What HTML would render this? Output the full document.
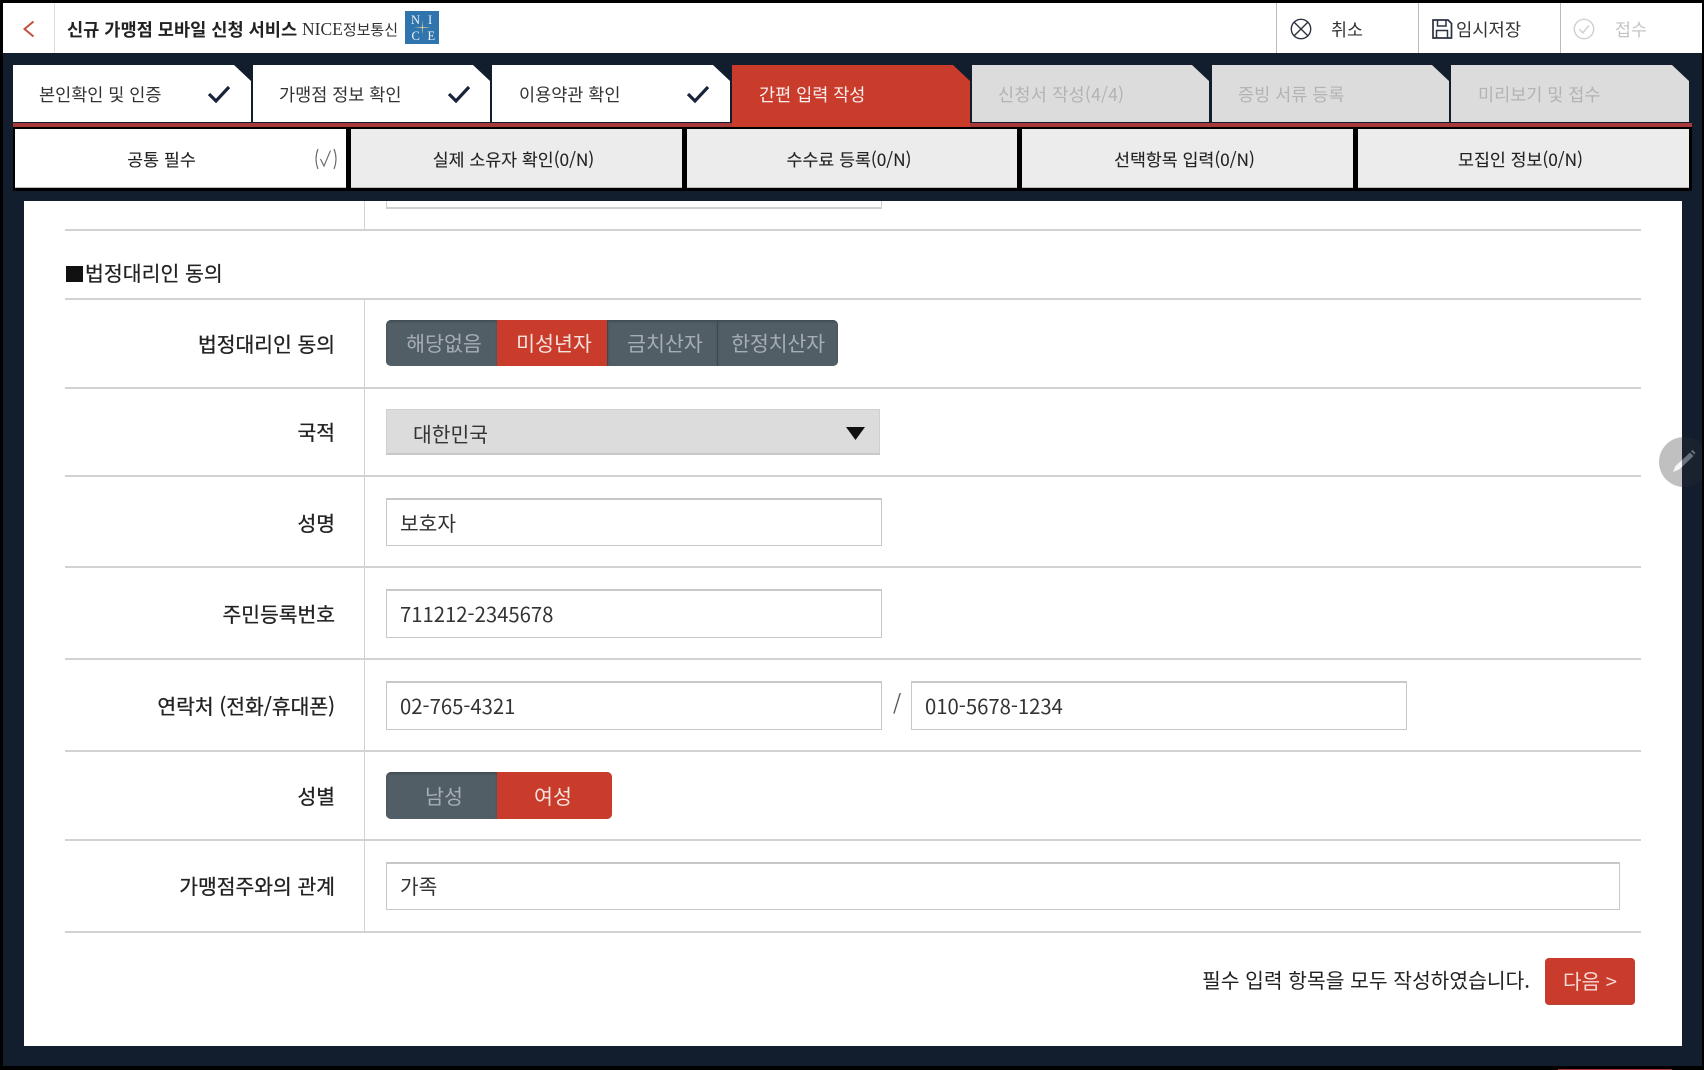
<!DOCTYPE html>
<html lang="ko"><head><meta charset="utf-8"><title>신규 가맹점 모바일 신청 서비스</title>
<style>
*{box-sizing:border-box;margin:0;padding:0}
html,body{width:1704px;height:1070px;overflow:hidden;background:#000}
body{position:relative;font-family:"Liberation Sans","Noto Sans CJK KR",sans-serif;color:#222}
.a{position:absolute}
.t{position:absolute;white-space:nowrap;font-family:"Noto Sans CJK KR","Liberation Sans",sans-serif;line-height:1}
.tab{position:absolute;top:65px;height:57px;clip-path:polygon(0 0,calc(100% - 17px) 0,100% 16px,100% 100%,0 100%);background:#fff}
.tab .t{top:21px;font-size:17.5px;color:#333}
.tab.off{background:#dcdcdc}.tab.off .t{color:#b3b3b3}
.sub{position:absolute;top:129px;height:59px;background:#ececec;border-bottom:1px solid #bbb;text-align:center}
.sub span{display:block;font-family:"Noto Sans CJK KR","Liberation Sans",sans-serif;font-size:17.3px;line-height:59px;color:#222;white-space:nowrap;-webkit-text-stroke:.1px #222}
.h{position:absolute;left:65px;width:1576px;height:2px;background:#d2d2d2}
.lb{position:absolute;right:1369px;font-family:"Noto Sans CJK KR","Liberation Sans",sans-serif;font-size:20.4px;line-height:24px;color:#222;white-space:nowrap;-webkit-text-stroke:.3px #222}
.in{position:absolute;background:#fff;border:1px solid #c8c8c8;border-top-width:2px;font-family:"Noto Sans CJK KR","Liberation Sans",sans-serif;font-size:20.3px;color:#333;padding-left:13px;white-space:nowrap}
.seg{position:absolute;top:0;height:100%;text-align:center;color:#a6adb3;background:#525e66;box-shadow:inset 0 2px 2px rgba(0,0,0,.18);font-family:"Noto Sans CJK KR","Liberation Sans",sans-serif;font-size:20.6px;white-space:nowrap}
.seg.on{background:#c93c2c;color:#f5e3e0;box-shadow:none}
.lg{position:absolute;font:12.5px/13px 'Liberation Serif',serif;color:#f2f6fa}
</style></head><body>
<div class="a" style="left:3px;top:3px;width:1699px;height:1063px;background:#121e2e"></div>

<!-- header -->
<div class="a" style="left:3px;top:3px;width:1699px;height:50px;background:#fff"></div>
<div class="a" style="left:54px;top:3px;width:1px;height:50px;background:#ddd"></div>
<svg class="a" style="left:20px;top:20px" width="18" height="18" viewBox="0 0 18 18"><path d="M13.5 1.5 L4.5 9 L13.5 16.5" fill="none" stroke="#c0503f" stroke-width="2"/></svg>
<div class="t" style="left:67px;top:21px;font-size:17.6px;font-weight:700;color:#222">신규 가맹점 모바일 신청 서비스</div>
<div class="t" style="left:302px;top:21px;font-size:17.5px;font-family:'Liberation Serif','Noto Serif CJK SC',serif;color:#333">NICE<span style="font-size:15px;font-family:'Noto Sans CJK KR',sans-serif">정보통신</span></div>
<div class="a" style="left:405px;top:11px;width:34px;height:33px;background:#2f74ad"></div>
<div class="a" style="left:422px;top:20px;width:1px;height:15px;background:linear-gradient(#2f74ad,#e0cf90,#2f74ad)"></div>
<div class="a" style="left:414px;top:27px;width:17px;height:1px;background:linear-gradient(90deg,#2f74ad,#e0cf90,#2f74ad)"></div>
<div class="lg" style="left:411px;top:14px">N</div>
<div class="lg" style="left:428px;top:14px">I</div>
<div class="lg" style="left:411.5px;top:30px">C</div>
<div class="lg" style="left:427.5px;top:30px">E</div>
<div class="a" style="left:1276px;top:3px;width:1px;height:50px;background:#bbb"></div>
<div class="a" style="left:1418px;top:3px;width:1px;height:50px;background:#bbb"></div>
<div class="a" style="left:1560px;top:3px;width:1px;height:50px;background:#bbb"></div>
<svg class="a" style="left:1290px;top:18px" width="22" height="22" viewBox="0 0 22 22"><circle cx="11" cy="11" r="9.7" fill="none" stroke="#2b3240" stroke-width="1.4"/><path d="M4.2 4.2 L17.8 17.8 M17.8 4.2 L4.2 17.8" stroke="#2b3240" stroke-width="1.4"/></svg>
<div class="t" style="left:1331px;top:21px;font-size:17.4px;color:#333">취소</div>
<svg class="a" style="left:1431px;top:18px" width="22" height="22" viewBox="0 0 22 22"><path d="M2 2 H17 L20.5 5.5 V20 H2 Z" fill="none" stroke="#2b3240" stroke-width="1.7"/><path d="M6.5 2 V8 H15 V2 M5.5 20 V12.5 H16.5 V20" fill="none" stroke="#2b3240" stroke-width="1.5"/></svg>
<div class="t" style="left:1456px;top:21px;font-size:17.7px;color:#333">임시저장</div>
<svg class="a" style="left:1573px;top:18px" width="22" height="22" viewBox="0 0 22 22"><circle cx="11" cy="11" r="9.7" fill="none" stroke="#cfcfcf" stroke-width="1.4"/><path d="M6.2 11.2 L9.8 14.8 L16 7.5" fill="none" stroke="#cfcfcf" stroke-width="1.4"/></svg>
<div class="t" style="left:1615px;top:21px;font-size:17.4px;color:#c4c4c4">접수</div>

<!-- tabs -->
<div class="a" style="left:13px;top:123px;width:1679px;height:4px;background:#a8393a"></div>
<div class="tab" style="left:13px;width:238px"><div class="t" style="left:26px">본인확인 및 인증</div>
<svg class="a" style="left:193px;top:18px" width="26" height="22" viewBox="0 0 26 22"><path d="M3 11 L10 18 L23 4" fill="none" stroke="#18243a" stroke-width="3.2"/></svg></div>
<div class="tab" style="left:253px;width:237px"><div class="t" style="left:26px">가맹점 정보 확인</div>
<svg class="a" style="left:193px;top:18px" width="26" height="22" viewBox="0 0 26 22"><path d="M3 11 L10 18 L23 4" fill="none" stroke="#18243a" stroke-width="3.2"/></svg></div>
<div class="tab" style="left:492px;width:238px"><div class="t" style="left:27px">이용약관 확인</div>
<svg class="a" style="left:193px;top:18px" width="26" height="22" viewBox="0 0 26 22"><path d="M3 11 L10 18 L23 4" fill="none" stroke="#18243a" stroke-width="3.2"/></svg></div>
<div class="tab" style="left:732px;width:238px;height:62px;background:#c93c2c"><div class="t" style="left:27px;color:#fbeeee">간편 입력 작성</div></div>
<div class="tab off" style="left:972px;width:237px"><div class="t" style="left:26px;letter-spacing:.25px">신청서 작성(4/4)</div></div>
<div class="tab off" style="left:1212px;width:237px"><div class="t" style="left:26px">증빙 서류 등록</div></div>
<div class="tab off" style="left:1451px;width:238px"><div class="t" style="left:27px">미리보기 및 접수</div></div>

<!-- sub tabs -->
<div class="a" style="left:13px;top:127px;width:1679px;height:64px;background:#000"></div>
<div class="sub" style="left:15px;width:331px;background:#fff"><span style="margin-left:-38px">공통 필수</span>
<svg class="a" style="left:298px;top:18px" width="26" height="24" viewBox="0 0 26 24"><path d="M5 2 Q1 12 5 22 M21 2 Q25 12 21 22" fill="none" stroke="#666" stroke-width="1.1"/><path d="M7.5 12 L11 19 L17.5 3.5" fill="none" stroke="#666" stroke-width="1.1"/></svg></div>
<div class="sub" style="left:351px;width:331px"><span style="margin-left:-6px">실제 소유자 확인(0/N)</span></div>
<div class="sub" style="left:687px;width:330px"><span style="margin-left:-6px">수수료 등록(0/N)</span></div>
<div class="sub" style="left:1022px;width:331px"><span style="margin-left:-6px">선택항목 입력(0/N)</span></div>
<div class="sub" style="left:1358px;width:331px"><span style="margin-left:-6px">모집인 정보(0/N)</span></div>

<!-- content -->
<div class="a" style="left:24px;top:201px;width:1658px;height:845px;background:#fff"></div>
<div class="a" style="left:386px;top:201px;width:496px;height:8px;border:1px solid #d0d0d0;border-top:0;border-bottom-width:2px"></div>
<div class="a" style="left:364px;top:201px;width:1px;height:29px;background:#d2d2d2"></div>
<div class="h" style="top:229px"></div>
<div class="t" style="left:66px;top:262px;font-size:20.5px;color:#222;-webkit-text-stroke:.2px #222"><span style="display:inline-block;width:17px;height:16px;background:#111;margin-right:2px;vertical-align:-1px"></span>법정대리인 동의</div>
<div class="h" style="top:298px"></div>
<div class="a" style="left:364px;top:298px;width:1px;height:634px;background:#d2d2d2"></div>
<div class="h" style="top:387px"></div>
<div class="h" style="top:475px"></div>
<div class="h" style="top:566px"></div>
<div class="h" style="top:658px"></div>
<div class="h" style="top:750px"></div>
<div class="h" style="top:839px"></div>
<div class="h" style="top:931px"></div>

<div class="lb" style="top:331px">법정대리인 동의</div>
<div class="a" style="left:386px;top:320px;width:452px;height:46px;border-radius:5px;overflow:hidden;background:#525e66">
<div class="seg" style="left:0;width:111px;line-height:45px;padding-left:5px">해당없음</div>
<div class="seg on" style="left:111px;width:110px;line-height:45px;padding-left:4px">미성년자</div>
<div class="seg" style="left:221px;width:111px;line-height:45px;border-right:1px solid #3e484f;border-left:1px solid #3e484f;padding-left:5px">금치산자</div>
<div class="seg" style="left:332px;width:120px;line-height:45px;letter-spacing:-.2px">한정치산자</div>
</div>

<div class="lb" style="top:419px">국적</div>
<div class="a" style="left:386px;top:409px;width:494px;height:46px;background:#dcdcdc;border:1px solid #cfcfcf;border-bottom:2px solid #c8c8c8"></div>
<div class="t" style="left:413px;top:423px;font-size:20.4px;color:#333">대한민국</div>
<svg class="a" style="left:846px;top:427px" width="19" height="13" viewBox="0 0 19 13"><path d="M0 0 H19 L9.5 13 Z" fill="#111"/></svg>

<div class="lb" style="top:510px">성명</div>
<div class="in" style="left:386px;top:498px;width:496px;height:48px;line-height:44px">보호자</div>

<div class="lb" style="top:601px">주민등록번호</div>
<div class="in" style="left:386px;top:589px;width:496px;height:49px;line-height:45px">711212-2345678</div>

<div class="lb" style="top:693px">연락처 (전화/휴대폰)</div>
<div class="in" style="left:386px;top:681px;width:496px;height:49px;line-height:45px">02-765-4321</div>
<div class="t" style="left:893px;top:693px;font-size:21px;color:#555">/</div>
<div class="in" style="left:911px;top:681px;width:496px;height:49px;line-height:45px">010-5678-1234</div>

<div class="lb" style="top:783px">성별</div>
<div class="a" style="left:386px;top:772px;width:226px;height:47px;border-radius:5px;overflow:hidden;background:#525e66">
<div class="seg" style="left:0;width:111px;line-height:46px;padding-left:5px">남성</div>
<div class="seg on" style="left:111px;width:115px;line-height:46px;padding-right:3px">여성</div>
</div>

<div class="lb" style="top:873px">가맹점주와의 관계</div>
<div class="in" style="left:386px;top:862px;width:1234px;height:48px;line-height:43px">가족</div>

<div class="t" style="left:1202px;top:969px;font-size:20.35px;color:#222">필수 입력 항목을 모두 작성하였습니다.</div>
<div class="a" style="left:1545px;top:958px;width:90px;height:47px;background:#c93c2c;border-radius:4px;border-bottom:1px solid #b0443a;color:#f6dcd8;text-align:center;font-family:'Noto Sans CJK KR',sans-serif;font-size:20.2px;line-height:46px">다음 &gt;</div>

<!-- floating pencil -->
<div class="a" style="left:1659px;top:437px;width:23px;height:50px;overflow:hidden"><div class="a" style="left:0;top:0;width:50px;height:50px;border-radius:50%;background:#c0c0c0"></div></div>
<div class="a" style="left:1682px;top:437px;width:20px;height:50px;background:#1a2230;clip-path:circle(25px at 2px 25px)"></div>
<svg class="a" style="left:1670px;top:448px;overflow:visible" width="26" height="26" viewBox="0 0 26 26"><path d="M3 24 L5.5 18 L12 12 L12 19 L9 21.5 Z" fill="#f6f6f6"/><path d="M12 12 L20 4.5 L23.5 8 L12 19 Z" fill="#6a7280"/><path d="M21 3.2 L22.5 1.8 L25.5 5 L24.2 6.4 Z" fill="#6a7280"/></svg>

<div class="a" style="left:1558px;top:1069px;width:114px;height:1px;background:#a33"></div>
</body></html>
